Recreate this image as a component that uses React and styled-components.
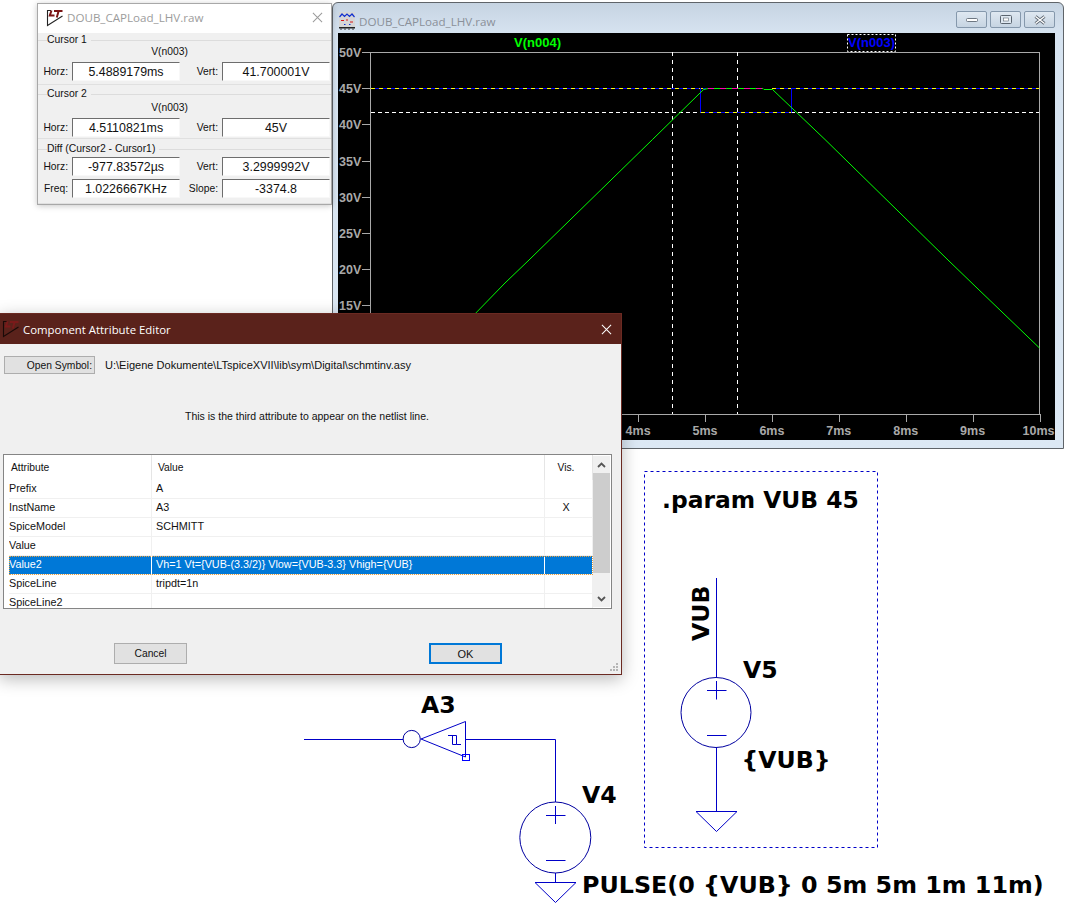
import React from "react";
import styled, { createGlobalStyle } from "styled-components";

const Global = createGlobalStyle`
  html, body { margin: 0; padding: 0; background: #fff; }
  body { width: 1067px; height: 912px; overflow: hidden; font-family: "Liberation Sans", Arial, sans-serif; }
`;
const Desktop = styled.div`
  position: relative; width: 1067px; height: 912px; overflow: hidden; background: #fff;
`;
const SchematicLayer = styled.svg`
  position: absolute; left: 0; top: 0; width: 1067px; height: 912px;
`;
const SchText = styled.text`
  font-family: "DejaVu Sans", sans-serif; font-weight: 700; font-size: ${p => p.$size || 23.6}px; fill: #000;
`;

/* ---- Plot window ---- */
const PlotWindow = styled.div`
  position: absolute; left: 332px; top: 2px; width: 732px; height: 447px; box-sizing: border-box;
  display: flex; flex-direction: column; border: 1px solid #5f6469; border-radius: 6px 6px 0 0;
  background: linear-gradient(#c6d4e2 0, #d6e3f0 30px, #dce8f4 100%); padding: 0 8px 8px 5px;
`;
const PlotTitleBar = styled.div`
  height: 30px; flex: none; display: flex; align-items: center; gap: 4px; box-sizing: border-box; padding: 5px 0 0 1px;
`;
const PlotTitle = styled.span`
  flex: 1; font-size: 11.6px; color: #8a9099; font-family: "Open Sans", sans-serif; white-space: nowrap; margin-top: 2px;
`;
const CaptionButtons = styled.div`
  display: flex; gap: 3px; margin-top: -2px; margin-right: 0;
`;
const CaptionButton = styled.div`
  width: 31px; height: 17px; box-sizing: border-box; border: 1px solid #8598ac; border-radius: 2px;
  background: linear-gradient(#dfe8f1, #c6d4e2); display: flex; align-items: center; justify-content: center;
`;
const PlotCanvas = styled.div`
  flex: 1; background: #000; min-height: 0;
`;
const PlotSvg = styled.svg`
  display: block; width: 717px; height: 407px;
`;
const AxisLabel = styled.text`
  font-family: "Liberation Sans", sans-serif; font-weight: 700; font-size: 12.5px; fill: #a9a9a9;
`;
const TraceLabel = styled.text`
  font-family: "Liberation Sans", sans-serif; font-weight: 700; font-size: 13px; fill: ${p => p.$color};
`;

/* ---- Cursor window ---- */
const CursorWindow = styled.div`
  position: absolute; left: 37px; top: 3px; width: 295px; height: 202px; box-sizing: border-box;
  background: #f0f0f0; border: 1px solid #a8a8a8; box-shadow: 0 1px 6px rgba(0,0,0,.22);
  display: flex; flex-direction: column; font-size: 10.3px; color: #111;
`;
const LightTitleBar = styled.div`
  height: 29px; flex: none; box-sizing: border-box; background: #fff; display: flex; align-items: center;
  padding: 0 8px 2px 8px; gap: 3px;
`;
const LightTitle = styled.span`
  flex: 1; font-family: "Open Sans", sans-serif; font-size: 11.6px; color: #9c9c9c; white-space: nowrap;
`;
const CursorSection = styled.section`
  position: relative; box-sizing: border-box; height: ${p => p.$h}px; padding-top: ${p => p.$pad}px;
  border-bottom: 1px solid #e0e0e0; display: flex; flex-direction: column;
`;
const SectionLegend = styled.div`
  position: absolute; left: 9px; top: ${p => p.$top}px; height: 12px; line-height: 12px; background: #f0f0f0;
  padding-right: 4px; z-index: 1; font-size: 10.4px;
`;
const SectionRule = styled.div`
  position: absolute; left: 0; right: 0; top: ${p => p.$top + 6}px; border-top: 1px solid #dcdcdc;
`;
const TraceName = styled.div`
  text-align: center; width: 263px; height: 18px; line-height: 15px; font-size: 10.3px;
`;
const FieldRow = styled.div`
  display: grid; grid-template-columns: 30px 108px 34px 108px; column-gap: 4px; height: 19px;
  margin-bottom: ${p => p.$gap || 0}px; align-items: center;
`;
const FieldLabel = styled.div`
  text-align: right; font-size: 10.3px;
`;
const Field = styled.div`
  box-sizing: border-box; height: 19px; background: #fff; border: 1px solid; border-color: #6d6d6d #f8f8f8 #f8f8f8 #6d6d6d;
  font-size: 12.4px; text-align: center; line-height: 19px; color: #111;
`;

/* ---- Dialog ---- */
const Dialog = styled.div`
  position: absolute; left: -1px; top: 313px; width: 623px; height: 362px; box-sizing: border-box;
  background: #f0f0f0; border: 1px solid #6b2a22; box-shadow: 0 4px 16px rgba(0,0,0,.28);
  display: flex; flex-direction: column; font-size: 10.3px; color: #111;
`;
const DialogTitleBar = styled.div`
  height: 30px; flex: none; background: #5a221b; display: flex; align-items: center; padding: 0 9px 0 2px; gap: 3px; color: #fff;
`;
const DialogTitle = styled.span`
  flex: 1; font-family: "Open Sans", sans-serif; font-size: 11.4px; white-space: nowrap;
`;
const SymbolRow = styled.div`
  display: flex; align-items: center; gap: 10px; padding: 12px 0 0 4px; height: 18px;
`;
const FlatButton = styled.div`
  box-sizing: border-box; width: ${p => p.$w}px; height: ${p => p.$h}px; background: #e1e1e1;
  border: ${p => (p.$primary ? "2px solid #0078d7" : "1px solid #adadad")};
  display: flex; align-items: center; justify-content: ${p => p.$end ? "flex-end" : "center"};
  padding-right: ${p => p.$end ? 2 : 0}px; font-size: ${p => p.$fs || 10.3}px;
`;
const PathText = styled.span`
  font-size: 11.05px; white-space: nowrap;
`;
const Hint = styled.div`
  text-align: center; width: 614px; margin-top: 36px; height: 12px; line-height: 12px; font-size: 10.5px;
`;
const AttrList = styled.div`
  margin: 32px 0 0 3px; width: 609px; height: 155px; box-sizing: border-box; background: #fff;
  border: 1px solid #858585; display: flex; overflow: hidden;
`;
const AttrTable = styled.div`
  flex: 1; min-width: 0; overflow: hidden; display: flex; flex-direction: column;
`;
const AttrHead = styled.div`
  display: grid; grid-template-columns: 148px 393px 48px; height: 25px; flex: none; align-items: center;
`;
const HeadCell = styled.div`
  height: 25px; line-height: 25px; padding-left: ${p => p.$pl || 0}px; padding-right: ${p => p.$center ? 5 : 0}px;
  box-sizing: border-box; text-align: ${p => p.$center ? "center" : "left"}; border-right: 1px solid #e5e5e5;
`;
const AttrRow = styled.div`
  display: grid; grid-template-columns: 143px 393px 48px; height: 19px; flex: none; box-sizing: border-box;
  margin-left: 5px; border-bottom: 1px solid #f0f0f0; line-height: 17px; font-size: 10.8px;
  background: ${p => p.$sel ? "#0078d7" : "#fff"}; color: ${p => p.$sel ? "#fff" : "#111"};
  outline: ${p => p.$sel ? "1px dotted #e8a040" : "none"}; outline-offset: -1px;
`;
const AttrCell = styled.div`
  padding-left: ${p => p.$pl || 0}px; padding-right: ${p => p.$center ? 5 : 0}px; box-sizing: border-box;
  text-align: ${p => p.$center ? "center" : "left"};
  border-right: 1px solid ${p => p.$sel ? "#fff" : "#f0f0f0"}; white-space: nowrap; overflow: hidden;
`;
const ScrollBar = styled.div`
  width: 17px; flex: none; background: #f0f0f0; margin: 1px 1px 1px 0; display: flex; flex-direction: column;
`;
const ScrollArrow = styled.div`
  height: 17px; flex: none; display: flex; align-items: center; justify-content: center;
`;
const ScrollThumb = styled.div`
  height: 100px; flex: none; background: #cdcdcd;
`;
const ScrollTrack = styled.div`
  flex: 1;
`;
const DialogActions = styled.div`
  display: flex; padding-left: 114px; margin-top: 34px; gap: 242px;
`;
const Grip = styled.svg`
  position: absolute; right: 2px; bottom: 2px; width: 10px; height: 10px;
`;

const Cross = ({ color = "#8a8a8a", size = 11 }) => (
  <svg width={size} height={size} viewBox="0 0 12 12" fill="none" stroke={color} strokeWidth="1.1"><path d="M1 1L11 11M11 1L1 11" /></svg>
);
const LTIcon = ({ mark = "#7a1414", edge = "#222" }) => (
  <svg width="18" height="18" viewBox="0 0 18 18" fill="none">
    <path d="M1.5 1V16.5L16.5 7" stroke={edge} strokeWidth="1.1" />
    <path d="M1.5 1.5H5" stroke={edge} strokeWidth="1" />
    <path d="M5.5 1.5L3.8 6.5H8.5" stroke={mark} strokeWidth="2" />
    <path d="M8 2H16.5M12.6 2L10.8 8.5" stroke={mark} strokeWidth="2" />
  </svg>
);
const WaveIcon = () => (
  <svg width="16" height="18" viewBox="0 0 16 18" fill="none">
    <rect x="0" y="0" width="16" height="15" fill="#d6d6d6" />
    <path d="M0.5 5L3 2L5.5 4.5L8 2L10.5 4.5L13 2L15.5 5" stroke="#1030d0" strokeWidth="1.2" />
    <path d="M2 8.5H5M7 8H9M11 10H14" stroke="#d81818" strokeWidth="1.2" />
    <path d="M5 12.5H6.5M10 12.5H11.5" stroke="#1030d0" strokeWidth="1.2" />
    <rect x="0" y="15" width="16" height="1.5" fill="#222" />
    <path d="M2 16.5V18M6 16.5V18M10 16.5V18M14 16.5V18" stroke="#222" strokeWidth="0.9" />
  </svg>
);

const OX = 338, OY = 33;
const yTicks = [[50, 52], [45, 88.2], [40, 124.4], [35, 160.6], [30, 196.8], [25, 233], [20, 269.2], [15, 305.4], [10, 341.6], [5, 377.8]];
const xTicks = [1, 2, 3, 4, 5, 6, 7, 8, 9, 10].map(n => [n, 370.5 + 66.9 * n]);

function Plot() {
  return (
    <PlotSvg viewBox={`${OX} ${OY} 717 407`}>
      <rect x="370.5" y="52.5" width="669" height="362" fill="none" stroke="#a9a9a9" />
      {yTicks.map(([v, y]) => (
        <g key={v}>
          <path d={`M362 ${Math.round(y) + 0.5}H370`} stroke="#a9a9a9" />
          <AxisLabel x="339" y={y + 5}>{v}V</AxisLabel>
        </g>
      ))}
      {xTicks.map(([n, x]) => (
        <g key={n}>
          <path d={`M${Math.round(x) + 0.5} 414V422`} stroke="#a9a9a9" />
          <AxisLabel x={n === 10 ? 1022.5 : x - 12.5} y="435">{n}ms</AxisLabel>
        </g>
      ))}
      <TraceLabel $color="#00ff00" x="514" y="47">V(n004)</TraceLabel>
      <TraceLabel $color="#0000ff" x="848" y="47">V(n003)</TraceLabel>
      <rect x="847.5" y="34.5" width="48" height="17" fill="none" stroke="#fff" strokeDasharray="2 2" />
      <path d="M672.5 52V414M737.5 52V414" stroke="#fff" strokeDasharray="4 4" />
      <path d="M371 112.5H1039" stroke="#fff" strokeDasharray="4 3" />
      <path d="M371 88.5H706M772 88.5H1039" stroke="#0000ff" />
      <path d="M371 88.5H706M772 88.5H1039" stroke="#ffff00" strokeDasharray="4 4" />
      <path d="M700.5 88V112.5H791.5V88" fill="none" stroke="#0000ff" />
      <path d="M701 112.5H791" stroke="#ffff00" strokeDasharray="4 4" />
      <path
        d="M470 319L505 283L529 260L652.5 139.5L700 93L703.5 89.6L708 88.5H763L764 89.5H772.5L825 139.5L948 260L977 288L1039.5 348"
        fill="none" stroke="#00ff00"
      />
      <path d="M708 88.5H763" stroke="#ff00b0" strokeDasharray="6 6" />
    </PlotSvg>
  );
}

function Schematic() {
  return (
    <SchematicLayer viewBox="0 0 1067 912">
      <g fill="none" stroke="#0000c8" strokeWidth="1">
        <rect x="644.5" y="471.5" width="233" height="376" strokeDasharray="3 3" />
        <path d="M304 739.5H403" />
        <circle cx="411.7" cy="739" r="8.6" stroke="#0000a0" />
        <path d="M421 739L465.5 721.5V757Z" />
        <path d="M448 735.5H456.5V744.5H461M452.5 735.5V744.5H456.5" />
        <rect x="462.5" y="754.5" width="7" height="6" stroke="#0000ff" />
        <path d="M466 739.5H555.5V802" />
        <circle cx="555.3" cy="837.5" r="35.5" stroke="#0000a0" />
        <path d="M546 815.5H565.5M555.5 806V824M546 860.5H565.5M555.5 873V882" />
        <path d="M535 882.5H576L555.5 902.5Z" />
        <path d="M716.5 578V677" />
        <circle cx="716" cy="712.5" r="35" stroke="#0000a0" />
        <path d="M707 690.5H726.5M716.5 681V699.5M707 735.5H726.5M716.5 747.5V811" />
        <path d="M696 811.5H737L716.5 831.5Z" />
      </g>
      <SchText x="421" y="713">A3</SchText>
      <SchText x="582" y="803">V4</SchText>
      <SchText $size={23.8} x="582" y="893">PULSE(0 {"{VUB}"} 0 5m 5m 1m 11m)</SchText>
      <SchText $size={23.4} x="662" y="508">.param VUB 45</SchText>
      <SchText x="743" y="678">V5</SchText>
      <SchText x="741.5" y="768">{"{VUB}"}</SchText>
      <SchText transform="translate(709 641) rotate(-90)">VUB</SchText>
    </SchematicLayer>
  );
}

const Section = ({ legend, name, rows, h, pad, top }) => (
  <CursorSection $h={h} $pad={pad}>
    <SectionRule $top={top} />
    <SectionLegend $top={top}>{legend}</SectionLegend>
    {name && <TraceName>{name}</TraceName>}
    {rows.map((r, i) => (
      <FieldRow key={i} $gap={i < rows.length - 1 ? 3 : 0}>
        <FieldLabel>{r[0]}</FieldLabel>
        <Field>{r[1]}</Field>
        <FieldLabel>{r[2]}</FieldLabel>
        <Field>{r[3]}</Field>
      </FieldRow>
    ))}
  </CursorSection>
);

const attrs = [
  ["Prefix", "A", ""],
  ["InstName", "A3", "X"],
  ["SpiceModel", "SCHMITT", ""],
  ["Value", "", ""],
  ["Value2", "Vh=1 Vt={VUB-(3.3/2)} Vlow={VUB-3.3} Vhigh={VUB}", ""],
  ["SpiceLine", "tripdt=1n", ""],
  ["SpiceLine2", "", ""],
];

export default function App() {
  return (
    <Desktop>
      <Global />
      <Schematic />
      <PlotWindow>
        <PlotTitleBar>
          <WaveIcon />
          <PlotTitle>DOUB_CAPLoad_LHV.raw</PlotTitle>
          <CaptionButtons>
            <CaptionButton><svg width="12" height="6"><rect x="0.5" y="1.5" width="11" height="3" rx="1" fill="#fff" stroke="#6d7782" /></svg></CaptionButton>
            <CaptionButton><svg width="12" height="9"><rect x="0.5" y="0.5" width="11" height="8" rx="1" fill="#dfe8f1" stroke="#5b6570" /><rect x="3.5" y="3" width="5" height="3" fill="#fff" stroke="#5b6570" strokeWidth="0.6" /></svg></CaptionButton>
            <CaptionButton><svg width="12" height="10" fill="none"><path d="M1.5 1.5L10.5 8.5M10.5 1.5L1.5 8.5" stroke="#5b6570" strokeWidth="3" /><path d="M1.5 1.5L10.5 8.5M10.5 1.5L1.5 8.5" stroke="#fff" strokeWidth="1.4" /></svg></CaptionButton>
          </CaptionButtons>
        </PlotTitleBar>
        <PlotCanvas><Plot /></PlotCanvas>
      </PlotWindow>

      <CursorWindow>
        <LightTitleBar>
          <LTIcon mark="#7a1414" />
          <LightTitle>DOUB_CAPLoad_LHV.raw</LightTitle>
          <Cross color="#9a9a9a" />
        </LightTitleBar>
        <Section h={52} pad={11} top={1} legend="Cursor 1" name="V(n003)" rows={[["Horz:", "5.4889179ms", "Vert:", "41.700001V"]]} />
        <Section h={54} pad={15} top={3} legend="Cursor 2" name="V(n003)" rows={[["Horz:", "4.5110821ms", "Vert:", "45V"]]} />
        <Section h={65} pad={18} top={4} legend="Diff (Cursor2 - Cursor1)" rows={[["Horz:", "-977.83572µs", "Vert:", "3.2999992V"], ["Freq:", "1.0226667KHz", "Slope:", "-3374.8"]]} />
      </CursorWindow>

      <Dialog>
        <DialogTitleBar>
          <LTIcon mark="#7a1a1a" edge="#1a0a08" />
          <DialogTitle>Component Attribute Editor</DialogTitle>
          <Cross color="#fff" />
        </DialogTitleBar>
        <SymbolRow>
          <FlatButton $w={91} $h={18} $end>Open Symbol:</FlatButton>
          <PathText>U:\Eigene Dokumente\LTspiceXVII\lib\sym\Digital\schmtinv.asy</PathText>
        </SymbolRow>
        <Hint>This is the third attribute to appear on the netlist line.</Hint>
        <AttrList>
          <AttrTable>
            <AttrHead>
              <HeadCell $pl={7}>Attribute</HeadCell>
              <HeadCell $pl={6}>Value</HeadCell>
              <HeadCell $center>Vis.</HeadCell>
            </AttrHead>
            {attrs.map(a => (
              <AttrRow key={a[0]} $sel={a[0] === "Value2"}>
                <AttrCell $sel={a[0] === "Value2"}>{a[0]}</AttrCell>
                <AttrCell $pl={4} $sel={a[0] === "Value2"}>{a[1]}</AttrCell>
                <AttrCell $center $sel={a[0] === "Value2"}>{a[2]}</AttrCell>
              </AttrRow>
            ))}
          </AttrTable>
          <ScrollBar>
            <ScrollArrow><svg width="9" height="6" fill="none"><path d="M1 5L4.5 1.5L8 5" stroke="#555" strokeWidth="1.8" /></svg></ScrollArrow>
            <ScrollThumb />
            <ScrollTrack />
            <ScrollArrow><svg width="9" height="6" fill="none"><path d="M1 1L4.5 4.5L8 1" stroke="#555" strokeWidth="1.8" /></svg></ScrollArrow>
          </ScrollBar>
        </AttrList>
        <DialogActions>
          <FlatButton $w={73} $h={21}>Cancel</FlatButton>
          <FlatButton $w={73} $h={21} $primary $fs={11}>OK</FlatButton>
        </DialogActions>
        <Grip viewBox="0 0 10 10" fill="#b5b5b5">
          <rect x="7" y="1" width="2" height="2" /><rect x="4" y="4" width="2" height="2" /><rect x="7" y="4" width="2" height="2" />
          <rect x="1" y="7" width="2" height="2" /><rect x="4" y="7" width="2" height="2" /><rect x="7" y="7" width="2" height="2" />
        </Grip>
      </Dialog>
    </Desktop>
  );
}
